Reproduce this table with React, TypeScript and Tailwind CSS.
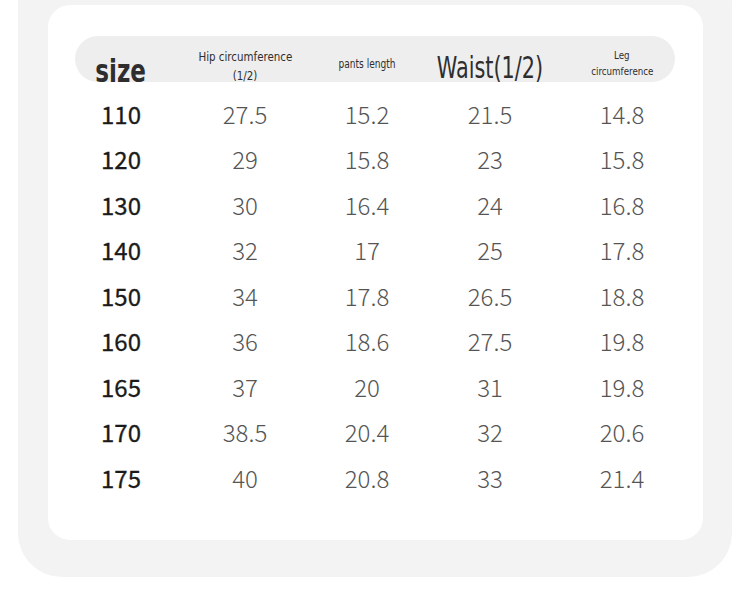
const rows = [
  ["110", "27.5", "15.2", "21.5", "14.8"],
  ["120", "29", "15.8", "23", "15.8"],
  ["130", "30", "16.4", "24", "16.8"],
  ["140", "32", "17", "25", "17.8"],
  ["150", "34", "17.8", "26.5", "18.8"],
  ["160", "36", "18.6", "27.5", "19.8"],
  ["165", "37", "20", "31", "19.8"],
  ["170", "38.5", "20.4", "32", "20.6"],
  ["175", "40", "20.8", "33", "21.4"],
];

const cond = "font-['DejaVu_Sans_Condensed','DejaVu_Sans',sans-serif]";
const cols = "grid grid-cols-[92px_156px_88px_158px_106px]";

export default function App() {
  return (
    <div className="w-[750px] h-[590px] overflow-hidden bg-white">
      <div className="ml-[18px] mt-[-40px] w-[714px] rounded-[44px] bg-[#f3f3f3] pl-[30px] pr-[29px] pt-[45px] pb-[37px]">
        <div className="h-[535px] rounded-[22px] bg-white pl-[27px] pr-[28px] pt-[31px]">
          {/* Header */}
          <div className={`${cols} h-[46px] items-center rounded-full bg-[#eeeeee] text-[#2e2e2e] ${cond}`}>
            <div className="flex justify-center pt-[19px]">
              <span className="inline-block scale-x-[0.8] text-[32px] font-bold leading-none">size</span>
            </div>
            <div className="flex flex-col items-center pt-[8px] text-[13px] leading-[19px]">
              <span className="inline-block scale-x-[0.88] whitespace-nowrap">Hip circumference</span>
              <span className="inline-block scale-x-[0.88]">(1/2)</span>
            </div>
            <div className="flex justify-center pt-[4px]">
              <span className="inline-block scale-x-[0.84] whitespace-nowrap text-[12px]">pants length</span>
            </div>
            <div className="flex justify-center pt-[13px]">
              <span className="inline-block scale-x-[0.77] whitespace-nowrap text-[30px] leading-none">Waist(1/2)</span>
            </div>
            <div className="flex flex-col items-center pt-[4px] text-[11px] leading-[16px]">
              <span className="inline-block scale-x-[0.88]">Leg</span>
              <span className="inline-block scale-x-[0.88]">circumference</span>
            </div>
          </div>

          {/* Rows */}
          <div className="mt-[9px] font-['Noto_Sans_CJK_SC','Noto_Sans',sans-serif]">
            {rows.map((r) => (
              <div key={r[0]} className={`${cols} h-[45.5px] items-center text-[24px] leading-none`}>
                {r.map((v, i) => (
                  <div
                    key={i}
                    className={
                      i === 0
                        ? "text-center font-normal text-[#1a1a1a] [-webkit-text-stroke:0.3px_#1a1a1a]"
                        : "text-center font-light text-[#555555]"
                    }
                  >
                    {v}
                  </div>
                ))}
              </div>
            ))}
          </div>
        </div>
      </div>
    </div>
  );
}
